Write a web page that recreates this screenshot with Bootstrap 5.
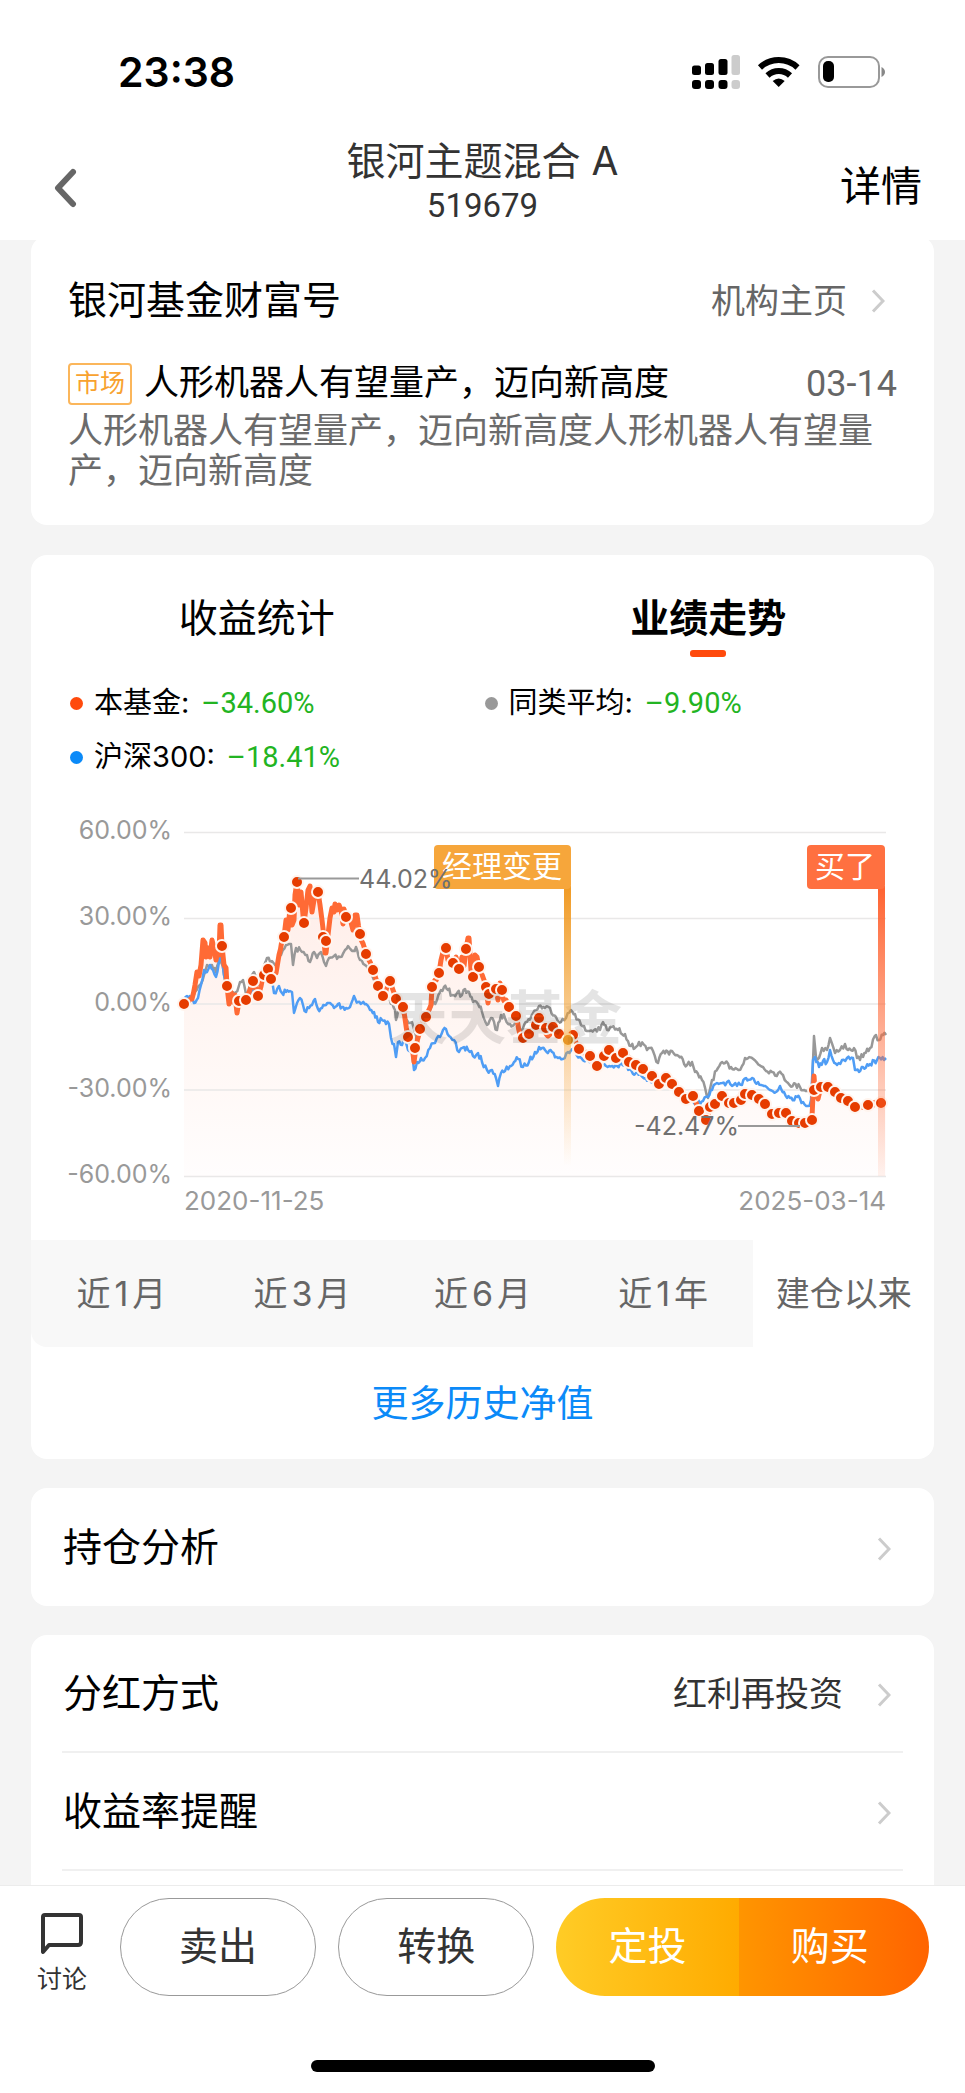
<!DOCTYPE html>
<html lang="zh-CN">
<head>
<meta charset="utf-8">
<meta name="viewport" content="width=device-width, initial-scale=1">
<title>银河主题混合A</title>
<link href="https://cdn.jsdelivr.net/npm/bootstrap@5.3.0/dist/css/bootstrap.min.css" rel="stylesheet">
<style>
  body { font-family: Roboto, "Noto Sans CJK SC", sans-serif; background: #f4f4f4; color: #000; }
  a { text-decoration: none; color: inherit; }
  button { font-family: inherit; }
  .f-inter { font-family: Inter, "Noto Sans CJK SC", sans-serif; }
  .t-sm { font-size: 25px; }
  .t-md { font-size: 29px; }
  .t-lg { font-size: 34px; }
  .t-xl { font-size: 39px; }
  .c-mid { color: #666; }
  .c-dark { color: #333; }
  .c-green { color: #22b422; margin-left: 12px; }

  .app-head { background: #fff; z-index: 2; }
  .status-row { padding: 42px 79px 0 118px; height: 102px; }
  .clock { font-size: 41px; font-weight: 600; line-height: 60px; }
  .nav-row { display: grid; grid-template-columns: 1fr auto 1fr; height: 104px; margin: 34px 43px 0; }
  .back-link { padding-left: 11px; }
  .fund-name { font-size: 39px; line-height: 50px; font-weight: 400; }
  .fund-code { font-size: 33px; line-height: 40px; }
  .detail-link { font-size: 41px; }

  .panel { background: #fff; border-radius: 16px; margin: 0 31px 29px; }
  .panel-first { margin-top: -4px; padding: 40px 37px 33px; margin-bottom: 30px; }
  .news-head { line-height: 50px; margin-bottom: 37px; padding-right: 12px; }
  .news-title { font-size: 35px; line-height: 42px; font-weight: 400; }
  .news-date { font-size: 36px; line-height: 42px; }
  .tag-box { border: 2px solid #fbb65b; border-radius: 4px; color: #f8a22f; font-size: 25px; line-height: 38px; padding: 0 5px; margin-right: 12px; }
  .news-text { font-size: 35px; line-height: 40px; margin: 7px 0 0; color: #6b6b6b; }

  .tab-btn { border: 0; background: none; padding: 34px 0 0; line-height: 60px; color: #000; }
  .tab-btn::after { content: ""; display: block; width: 36px; height: 7px; margin: 1px auto 0; border-radius: 3px; }
  .tab-btn.on { font-weight: 700; }
  .tab-btn.on::after { background: #ff4a0c; }
  .legend-grid { margin: 19px 37px 16px; line-height: 54px; }
  .legend-item { width: 50%; }
  .legend-dot { width: 13px; height: 13px; border-radius: 50%; margin: 0 11px 0 2px; }
  .chart { display: block; width: 100%; height: auto; }
  .seg-btn { border: 0; background: #f8f8f8; height: 107px; flex: 1 1 0; padding: 0; color: #666; }
  .seg-btn:first-child { border-bottom-left-radius: 16px; }
  .seg-btn.on { background: #fff; }
  .more-link { display: block; padding-top: 4px; line-height: 108px; font-size: 37px; color: #0b8af8; text-align: center; }

  .row-link { display: flex; align-items: center; justify-content: space-between; height: 118px; margin: 0 31px; padding: 3px 12px 0 1px; }
  .row-line { border-bottom: 2px solid #f0f0f0; }
  .panel-last { flex: 1 0 auto; margin-bottom: 0; border-radius: 16px 16px 0 0; padding-bottom: 14px; }

  .action-bar { background: #fff; border-top: 1px solid #ececec; padding: 12px 0 21px; }
  .action-row { padding: 0 36px 0 32px; height: 98px; }
  .talk { width: 60px; margin-right: 28px; padding-top: 14px; gap: 8px; color: #333; line-height: 32px; }
  .pill { height: 98px; border-radius: 49px; border: 1px solid #999; background: #fff; flex: 195 1 0; margin-right: 22px; color: #333; padding: 0; }
  .buy-group { height: 98px; border-radius: 49px; overflow: hidden; flex: 374 1 0; }
  .buy-group button { flex: 1 1 0; border: 0; color: #fff; padding: 0; }
  .buy-group .b-plan { background: linear-gradient(90deg, #ffcc26, #ffab00); }
  .buy-group .b-buy { background: linear-gradient(90deg, #ff9500, #ff6400); padding-right: 8px; }
  .home-bar { width: 344px; height: 12px; border-radius: 6px; background: #000; margin: 64px auto 0; }
</style>
</head>
<body>
<div class="min-vh-100 d-flex flex-column">
  <header class="app-head position-relative">
    <div class="status-row d-flex justify-content-between align-items-center">
      <span class="clock f-inter">23:38</span>
      <svg width="196" height="36" viewBox="690 54 196 36" aria-hidden="true">
        <g fill="#000">
          <rect x="692" y="65.500" width="9" height="9.500" rx="2.500"/><rect x="705" y="63" width="9" height="12" rx="2.500"/><rect x="718.500" y="59" width="9" height="16" rx="2.500"/>
          <rect x="692" y="80" width="9" height="9" rx="3"/><rect x="705" y="80" width="9" height="9" rx="3"/><rect x="718.500" y="80" width="9" height="9" rx="3"/>
        </g>
        <g fill="#ccc"><rect x="731.500" y="55" width="8.500" height="20" rx="2.500"/><rect x="731.500" y="80" width="8.500" height="9" rx="3"/></g>
        <g fill="none" stroke="#000" stroke-width="6"><path d="M760 67.500a27.500 27.500 0 0 1 37.500 0"/><path d="M767.500 75.500a16.500 16.500 0 0 1 22.500 0"/></g>
        <path d="M778.700 87l-6-6q6-5 12 0z"/>
        <rect x="819" y="57" width="60" height="30" rx="9" fill="none" stroke="#999" stroke-width="2"/>
        <rect x="823" y="61" width="11" height="21" rx="5"/>
        <path d="M881.500 67q3.500 2 3.500 5t-3.500 5z" fill="#888"/>
      </svg>
    </div>
    <div class="nav-row align-items-center">
      <a href="#" class="back-link" aria-label="返回"><svg width="24" height="40" viewBox="0 0 24 40" fill="none" stroke="#666" stroke-width="6" stroke-linecap="round" stroke-linejoin="round" class="d-block"><path d="M19 4L4 20l15 16"/></svg></a>
      <div class="text-center c-dark align-self-start">
        <h1 class="fund-name f-inter m-0">银河主题混合 A</h1>
        <div class="fund-code">519679</div>
      </div>
      <a href="#" class="detail-link text-end">详情</a>
    </div>
  </header>

  <main class="flex-grow-1 d-flex flex-column">
    <section class="panel panel-first">
      <div class="news-head d-flex justify-content-between align-items-center">
        <span class="t-xl">银河基金财富号</span>
        <a href="#" class="t-lg c-mid d-flex align-items-center">机构主页<svg class="ms-4" width="14" height="24" viewBox="0 0 14 24" fill="none" stroke="#ccc" stroke-width="3"><path d="M2 1.500L12 12 2 22.500"/></svg></a>
      </div>
      <div class="d-flex align-items-center">
        <span class="tag-box">市场</span>
        <h2 class="news-title m-0">人形机器人有望量产，迈向新高度</h2>
        <time class="news-date c-mid ms-auto">03-14</time>
      </div>
      <p class="news-text">人形机器人有望量产，迈向新高度人形机器人有望量产，迈向新高度</p>
    </section>

    <section class="panel">
      <div class="d-flex">
        <button type="button" class="tab-btn t-xl w-50">收益统计</button>
        <button type="button" class="tab-btn t-xl w-50 on">业绩走势</button>
      </div>
      <div class="legend-grid d-flex flex-wrap t-md">
        <div class="legend-item d-flex align-items-center"><i class="legend-dot" style="background:#ff4a0c"></i><span class="f-inter">本基金:</span><span class="c-green">–34.60%</span></div>
        <div class="legend-item d-flex align-items-center"><i class="legend-dot" style="background:#999"></i><span class="f-inter">同类平均:</span><span class="c-green">–9.90%</span></div>
        <div class="legend-item d-flex align-items-center"><i class="legend-dot" style="background:#0b8af8"></i><span class="f-inter">沪深300:</span><span class="c-green">–18.41%</span></div>
      </div>

      <svg class="chart f-inter" viewBox="31 800 903 440" role="img" aria-label="业绩走势">
        <defs>
          <linearGradient id="area" x1="0" y1="0" x2="0" y2="1"><stop offset="0" stop-color="#ffede8"/><stop offset=".5" stop-color="#fff6f3"/><stop offset="1" stop-color="#fffdfd"/></linearGradient>
          <linearGradient id="pole1" x1="0" y1="0" x2="0" y2="1"><stop offset="0" stop-color="#f09a24"/><stop offset="1" stop-color="#f6a63b" stop-opacity="0"/></linearGradient>
          <linearGradient id="pole2" x1="0" y1="0" x2="0" y2="1"><stop offset="0" stop-color="#ff6230"/><stop offset="1" stop-color="#ff7040" stop-opacity=".08"/></linearGradient>
        </defs>
        <path id="fundArea" fill="url(#area)"/>
        <path d="M184 832.500H886M184 918.500H886M184 1004H886M184 1090H886M184 1176.500H886" stroke="#e9e8e8" stroke-width="1.500"/>
        <g font-size="25" fill="#999" text-anchor="end">
          <text x="172" y="839">60.00%</text><text x="172" y="925">30.00%</text><text x="172" y="1011">0.00%</text><text x="172" y="1097">-30.00%</text><text x="172" y="1183">-60.00%</text>
          <text x="886" y="1210" font-size="26">2025-03-14</text>
        </g>
        <text x="184" y="1210" font-size="26" fill="#999">2020-11-25</text>
        <g fill="none" stroke-linejoin="round">
          <path id="avgLine" stroke="#989898" stroke-width="2.500"/>
          <path id="hsLine" stroke="#4f9df5" stroke-width="2.500"/>
          <path id="fundLine" stroke="#ff6a35" stroke-width="5"/>
        </g>
        <g id="dots" fill="#e63c00" stroke="#fff4ee" stroke-width="2"></g>
        <circle cx="568" cy="1040" r="6" fill="#df8c1c" stroke="#fff4d8" stroke-width="2"/>
        <text x="390" y="1039" font-size="58" font-weight="700" fill="#000" opacity=".1">天天基金</text>
        <rect x="564" y="886" width="7" height="280" fill="url(#pole1)"/>
        <rect x="434" y="845" width="137" height="44" rx="4" fill="#f6a63b"/>
        <text x="442" y="877" font-size="30" fill="#fff">经理变更</text>
        <rect x="878" y="886" width="7" height="290" fill="url(#pole2)"/>
        <rect x="807" y="845" width="78" height="44" rx="4" fill="#ff7040"/>
        <text x="815" y="877" font-size="30" fill="#fff">买了</text>
        <path d="M298 878.500H359M738 1126H800" stroke="#999" stroke-width="2"/>
        <g font-size="25" fill="#707070"><text x="359" y="888">44.02%</text><text x="634" y="1135">-42.47%</text></g>
      </svg>

      <div class="d-flex">
        <button type="button" class="seg-btn t-lg f-inter">近<span class="mx-1">1</span>月</button>
        <button type="button" class="seg-btn t-lg f-inter">近<span class="mx-1">3</span>月</button>
        <button type="button" class="seg-btn t-lg f-inter">近<span class="mx-1">6</span>月</button>
        <button type="button" class="seg-btn t-lg f-inter">近<span class="mx-1">1</span>年</button>
        <button type="button" class="seg-btn t-lg f-inter on">建仓以来</button>
      </div>
      <a href="#" class="more-link">更多历史净值</a>
    </section>

    <section class="panel">
      <a href="#" class="row-link t-xl">持仓分析<svg width="14" height="24" viewBox="0 0 14 24" fill="none" stroke="#ccc" stroke-width="3"><path d="M2 1.500L12 12 2 22.500"/></svg></a>
    </section>

    <section class="panel panel-last">
      <a href="#" class="row-link row-line t-xl">分红方式<span class="t-lg c-dark d-flex align-items-center">红利再投资<svg class="ms-4" width="24" height="24" viewBox="-10 0 24 24" fill="none" stroke="#ccc" stroke-width="3"><path d="M2 1.500L12 12 2 22.500"/></svg></span></a>
      <a href="#" class="row-link row-line t-xl">收益率提醒<svg width="14" height="24" viewBox="0 0 14 24" fill="none" stroke="#ccc" stroke-width="3"><path d="M2 1.500L12 12 2 22.500"/></svg></a>
    </section>
  </main>

  <footer class="action-bar">
    <div class="action-row d-flex align-items-center">
      <a href="#" class="talk t-sm d-flex flex-column align-items-center">
        <svg width="44" height="44" viewBox="0 0 44 44" fill="none" stroke="#333" stroke-width="4" stroke-linejoin="round"><path d="M3 40V5q0-2 2-2H39q2 0 2 2V30q0 3-3 3H9z"/></svg>
        <span>讨论</span>
      </a>
      <button type="button" class="pill t-xl">卖出</button>
      <button type="button" class="pill t-xl">转换</button>
      <div class="buy-group d-flex">
        <button type="button" class="b-plan t-xl">定投</button>
        <button type="button" class="b-buy t-xl">购买</button>
      </div>
    </div>
    <div class="home-bar"></div>
  </footer>
</div>
<script src="https://cdn.jsdelivr.net/npm/bootstrap@5.3.0/dist/js/bootstrap.bundle.min.js"></script>
<script>
  const parse = s => s.trim().split(/\s+/).map(p => p.split(',').map(Number));
  const dots = parse(`184,1004 222,946 227,986 239,1001 246,1000 253,981 258,996 264,975 268,969 271,979 284,937 291,908 297,882 304,923 318,892 323,937 326,941 346,917 360,934 366,954 373,970 378,986 383,996 390,981 396,999 403,1007 408,1037 415,1048 420,1029 426,1017 432,987 439,973 446,948 453,963 459,969 466,949 473,977 479,967 486,987 489,994 496,989 502,990 509,1007 516,1016 523,1038 529,1034 536,1025 539,1018 546,1028 553,1027 559,1034 573,1035 579,1049 590,1056 597,1066 604,1056 609,1050 616,1058 623,1053 629,1062 636,1065 643,1069 652,1076 659,1084 666,1078 672,1084 679,1092 686,1099 693,1096 699,1111 706,1120 710,1107 715,1104 722,1096 729,1103 734,1103 741,1100 745,1094 752,1095 759,1099 765,1104 772,1114 779,1113 786,1113 792,1121 799,1123 805,1123 812,1120 814,1090 821,1087 828,1087 835,1092 841,1098 848,1101 855,1107 868,1105 881,1103`);
  const fund = parse(`184,1004 188,1002 192,999 195,985 197,972 199,976 201,965 203,940 205,943 206,957 208,948 210,957 212,940 214,948 216,960 218,948 219,955 220,925 221,925 222,946 224,965 226,968 227,986 229,1004 231,992 233,1002 235,995 237,1013 239,1001 246,1000 253,981 258,996 264,975 268,969 271,979 276,973 279,955 282,940 284,937 286,920 288,930 290,908 292,925 294,920 295,895 297,882 299,905 301,892 303,915 304,923 306,908 308,890 310,886 312,912 314,900 316,890 318,892 320,905 322,920 324,937 325,953 326,953 328,935 330,918 332,908 334,912 335,904 337,910 339,905 341,910 343,924 344,909 346,917 350,918 353,930 355,915 357,915 360,934 366,954 373,970 378,986 383,996 390,981 396,999 403,1007 408,1037 412,1045 414,1062 416,1048 420,1029 426,1017 431,1005 432,987 439,973 441,960 443,952 446,948 448,960 453,963 456,957 459,969 462,957 464,966 466,949 468,938 469,938 470,955 471,970 473,977 475,955 477,957 479,967 484,980 486,987 488,1003 489,994 493,992 496,989 498,1000 500,983 502,995 504,1001 506,1000 509,1007 516,1016 520,1034 523,1038 529,1034 536,1025 539,1018 544,1028 548,1036 553,1027 559,1034 568,1040 573,1035 579,1049 590,1056 597,1066 604,1056 609,1050 616,1058 623,1053 636,1065 652,1076 659,1084 666,1078 679,1092 686,1099 693,1096 699,1111 706,1120 710,1107 722,1096 729,1103 745,1094 759,1099 772,1114 786,1113 792,1121 805,1123 812,1117 813,1095 814,1076 815,1090 818,1099 821,1087 828,1087 841,1098 855,1107 868,1105 881,1103`);
  const hs = parse(`184,1004 187,996 191,998 194,1003 198,998 201,985 204,970 207,972 210,965 213,970 216,977 219,962 221,955 224,975 227,987 230,1000 238,1003 246,1000 255,985 262,975 268,970 272,980 274,993 279,986 282,993 286,992 290,991 292,992 294,1013 297,1003 300,998 303,1005 306,1012 309,1008 312,1005 315,999 318,1009 322,1008 326,1005 330,1003 334,1008 338,1004 342,1007 346,1008 350,1007 354,996 358,1002 362,1003 366,1004 370,1010 374,1012 378,1022 382,1020 386,1024 389,1024 391,1038 394,1044 396,1057 398,1042 402,1045 405,1040 408,1050 412,1052 414,1070 417,1062 421,1058 425,1058 430,1048 435,1043 440,1037 443,1030 446,1029 449,1036 454,1040 459,1052 464,1047 468,1050 473,1056 478,1053 482,1062 487,1070 492,1070 496,1078 498,1086 501,1073 505,1071 510,1066 514,1062 518,1059 523,1067 529,1062 535,1052 539,1047 545,1050 552,1052 558,1058 563,1059 568,1052 575,1050 580,1057 588,1060 597,1067 606,1066 617,1066 625,1065 633,1074 640,1073 650,1080 660,1085 672,1086 685,1096 697,1103 703,1101 708,1097 712,1090 717,1083 722,1083 727,1082 732,1086 737,1086 742,1085 746,1078 752,1078 758,1082 764,1086 770,1090 776,1092 780,1086 784,1092 790,1098 797,1097 803,1102 808,1106 811,1100 813,1060 815,1057 819,1067 823,1061 827,1062 830,1050 833,1060 837,1065 842,1060 847,1058 853,1058 855,1070 859,1072 863,1067 870,1064 877,1060 884,1060 886,1058`);
  const avg = parse(`184,1004 190,1000 195,992 200,985 204,975 207,965 212,965 216,972 220,955 224,975 228,995 232,996 236,992 240,982 243,980 247,995 252,975 254,972 258,985 263,970 267,958 272,961 276,965 281,955 286,945 291,944 293,965 296,948 302,952 307,955 310,962 314,952 317,958 321,952 324,962 326,966 329,958 334,956 340,957 345,950 348,946 352,951 356,947 360,960 365,965 372,975 380,985 388,998 395,1010 396,1020 400,1005 407,1020 412,1022 416,1040 420,1030 426,1018 432,1005 437,1000 441,990 444,987 448,990 452,995 457,993 462,995 465,989 469,992 473,1002 478,1004 482,1012 487,1025 491,1018 497,1030 501,1015 505,1018 510,1024 516,1022 520,1030 527,1022 533,1013 539,1006 545,1008 550,1008 556,1017 561,1022 566,1018 571,1010 575,1014 581,1025 587,1031 594,1030 600,1030 603,1022 607,1030 612,1027 618,1030 625,1034 631,1046 635,1048 639,1042 647,1050 653,1051 658,1063 662,1053 672,1051 677,1055 687,1065 692,1062 695,1072 702,1080 708,1098 712,1080 718,1068 725,1063 731,1067 737,1069 742,1066 745,1058 752,1058 763,1067 772,1072 783,1075 788,1083 800,1087 810,1092 812,1087 814,1036 816,1057 819,1058 822,1048 827,1050 830,1038 835,1053 840,1050 845,1044 848,1050 854,1048 857,1058 863,1057 870,1048 876,1035 879,1040 883,1035 886,1035`);

  function daily(points, amp) {
    let seed = 7;
    const rnd = () => (seed = (seed * 16807) % 2147483647) / 2147483647 - 0.5;
    const out = [points[0]];
    for (let i = 1; i < points.length; i++) {
      const [x0, y0] = points[i - 1], [x1, y1] = points[i];
      const n = Math.max(1, Math.round((x1 - x0) / 1.5));
      for (let k = 1; k < n; k++) out.push([x0 + (x1 - x0) * k / n, y0 + (y1 - y0) * k / n + rnd() * amp]);
      out.push([x1, y1]);
    }
    return 'M' + out.map(p => p[0].toFixed(1) + ' ' + p[1].toFixed(1)).join('L');
  }
  const set = (id, d) => document.getElementById(id).setAttribute('d', d);
  const line = daily(fund, 4);
  set('fundLine', line);
  set('fundArea', line + 'L886 1103V1176H184Z');
  set('hsLine', daily(hs, 6));
  set('avgLine', daily(avg, 6));
  document.getElementById('dots').innerHTML = dots.map(([x, y]) => `<circle cx="${x}" cy="${y}" r="6"/>`).join('');
</script>
</body>
</html>
